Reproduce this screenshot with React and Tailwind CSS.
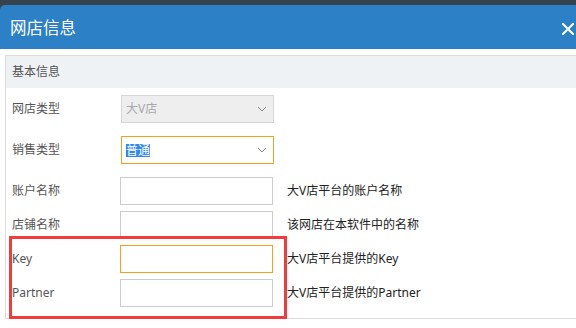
import React from "react";

const font = { fontFamily: '"Noto Sans", "Noto Sans CJK SC", sans-serif' };

function Chevron() {
  return (
    <svg width="10" height="6" viewBox="0 0 10 6" className="shrink-0">
      <polyline points="1,1 5,5 9,1" fill="none" stroke="#8a8a8a" strokeWidth="1" />
    </svg>
  );
}

function Row({ label, children, help, className }) {
  return (
    <div className={"flex items-center h-[28px] " + (className || "")}>
      <div className="w-[108px] text-[12px] text-[#555]">{label}</div>
      {children}
      {help && <div className="ml-[14px] text-[12px] text-[#222]">{help}</div>}
    </div>
  );
}

export default function App() {
  return (
    <div className="w-[576px] h-[328px] overflow-hidden bg-white relative" style={font}>
      <div className="h-[5px] bg-[#36424c]" />
      <div className="absolute top-[5px] left-0 w-[6px] h-[6px] bg-[#36424c]" />
      <div className="relative h-[44px] bg-[#2b80c6] rounded-tl-[5px] flex items-center justify-between pl-[10px] pr-[2px]">
        <span className="text-white text-[16.5px] leading-none pt-[2px]">网店信息</span>
        <svg width="12" height="12" viewBox="0 0 12 12" className="mt-[3px]">
          <path d="M1 1 L11 11 M11 1 L1 11" stroke="white" strokeWidth="2" strokeLinecap="square" />
        </svg>
      </div>
      <div className="pt-[6px] pl-[5px]">
        <div className="w-[620px] border-l border-t border-b border-[#dcdcdc]">
          <div className="h-[32px] bg-[#eef2f5] flex items-center pl-[6px] text-[12px] text-[#555]">
            基本信息
          </div>
          <div className="pl-[6px] pt-[7px] pb-[11px] flex flex-col">
            <Row label="网店类型">
              <div className="ml-[1px] w-[153px] h-[28px] bg-[#eeeeee] border border-[#d6d6d6] flex items-center justify-between pl-[4px] pr-[6px] text-[12px] text-[#a8a8a8]">
                <span>大V店</span>
                <Chevron />
              </div>
            </Row>
            <Row label="销售类型" className="mt-[13px]">
              <div className="ml-[1px] w-[153px] h-[28px] bg-white border border-[#f5a21b] flex items-center justify-between pl-[4px] pr-[6px] text-[12px]">
                <span className="bg-[#3388f0] text-white leading-[13px]">普通</span>
                <Chevron />
              </div>
            </Row>
            <Row label="账户名称" className="mt-[13px]" help="大V店平台的账户名称">
              <div className="w-[153px] h-[28px] border border-[#cccccc] bg-white" />
            </Row>
            <Row label="店铺名称" className="mt-[6px]" help="该网店在本软件中的名称">
              <div className="w-[153px] h-[28px] border border-[#cccccc] bg-white" />
            </Row>
            <Row label="Key" className="mt-[6px]" help="大V店平台提供的Key">
              <div className="w-[153px] h-[28px] border border-[#f5a21b] bg-white" />
            </Row>
            <Row label="Partner" className="mt-[6px]" help="大V店平台提供的Partner">
              <div className="w-[153px] h-[28px] border border-[#cccccc] bg-white" />
            </Row>
          </div>
        </div>
      </div>
      <div className="absolute left-[9px] top-[236px] w-[278px] h-[83px] border-[3px] border-[#f23b3b]" />
    </div>
  );
}
